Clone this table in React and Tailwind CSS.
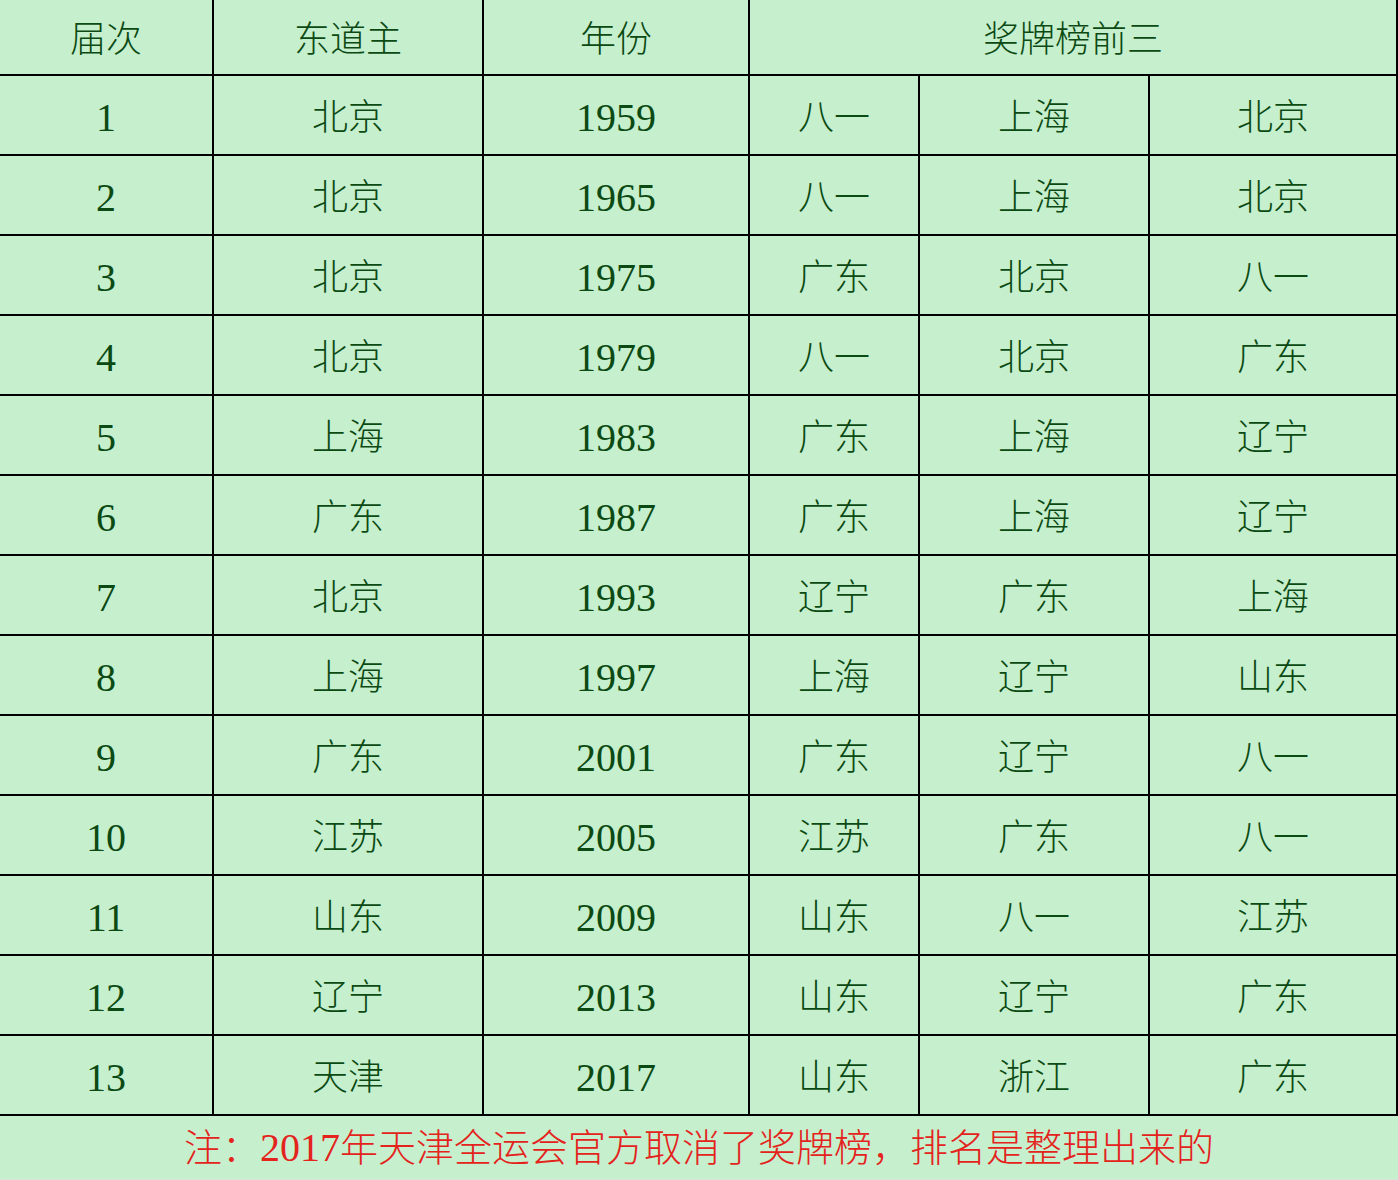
import React from 'react';

const rows = [
  ['1', '北京', '1959', '八一', '上海', '北京'],
  ['2', '北京', '1965', '八一', '上海', '北京'],
  ['3', '北京', '1975', '广东', '北京', '八一'],
  ['4', '北京', '1979', '八一', '北京', '广东'],
  ['5', '上海', '1983', '广东', '上海', '辽宁'],
  ['6', '广东', '1987', '广东', '上海', '辽宁'],
  ['7', '北京', '1993', '辽宁', '广东', '上海'],
  ['8', '上海', '1997', '上海', '辽宁', '山东'],
  ['9', '广东', '2001', '广东', '辽宁', '八一'],
  ['10', '江苏', '2005', '江苏', '广东', '八一'],
  ['11', '山东', '2009', '山东', '八一', '江苏'],
  ['12', '辽宁', '2013', '山东', '辽宁', '广东'],
  ['13', '天津', '2017', '山东', '浙江', '广东'],
];

const cell = 'bg-[#c6efce] flex items-center justify-center text-[#0b4a12] pt-[5px]';

const App = () => {
  return (
    <div
      className="w-[1398px] h-[1180px] bg-[#c6efce] text-[36px] leading-none font-light"
      style={{ fontFamily: '"Liberation Serif", "Noto Sans CJK SC", serif' }}
    >
      <div className="bg-black pr-[2px] pb-[2px] grid grid-cols-[212px_268px_264px_168px_228px_246px] grid-rows-[74px] auto-rows-[78px] gap-[2px]">
        <div className={cell}>届次</div>
        <div className={cell}>东道主</div>
        <div className={cell}>年份</div>
        <div className={cell + ' col-span-3'}>奖牌榜前三</div>
        {rows.map((r) =>
          r.map((v, i) => (
            <div key={r[0] + '-' + i} className={cell + (i === 0 || i === 2 ? ' text-[40px]' : '')}>
              {v}
            </div>
          ))
        )}
      </div>
      <div className="h-[64px] flex items-center justify-center text-[#e3231c] text-[38px] border-b border-[#d9e6dc]">
        注：<span className="text-[40px]">2017</span>年天津全运会官方取消了奖牌榜，排名是整理出来的
      </div>
    </div>
  );
};

export default App;
